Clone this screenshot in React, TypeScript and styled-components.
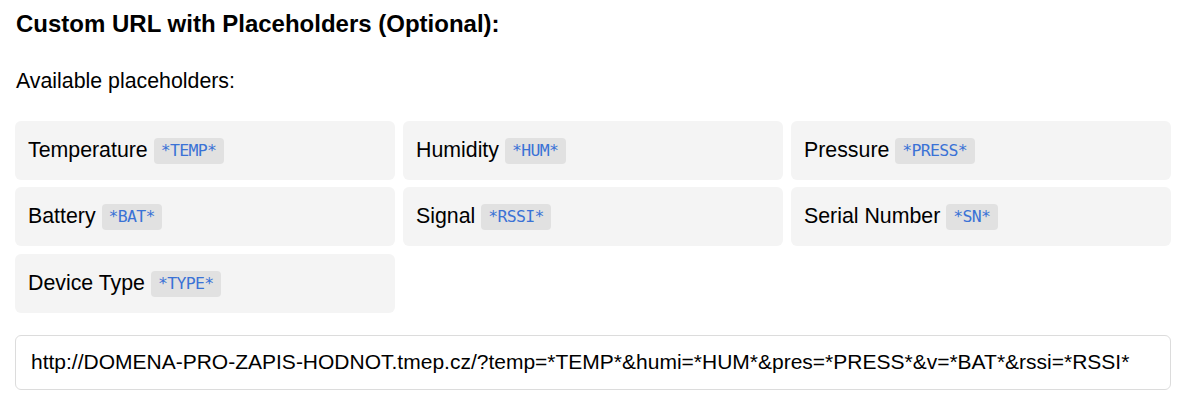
import * as React from "react"
import styled, { createGlobalStyle } from "styled-components"

const GlobalStyle = createGlobalStyle`
  html, body {
    margin: 0;
    padding: 0;
    background: #fff;
  }
  body {
    font-family: "Liberation Sans", Arial, sans-serif;
    color: #000;
  }
`

const Section = styled.div`
  width: 1156px;
  padding: 10px 0 0 15px;
  display: flex;
  flex-direction: column;
`

const Title = styled.h3`
  font-size: 24px;
  font-weight: bold;
  margin: 0 0 30px 1px;
  line-height: normal;
`

const Hint = styled.p`
  font-size: 21.33px;
  margin: 1px 0 26.5px 1px;
  line-height: normal;
`

const Grid = styled.div`
  display: grid;
  grid-template-columns: repeat(3, 1fr);
  gap: 7.5px 8px;
`

const Card = styled.div`
  height: 59px;
  box-sizing: border-box;
  padding: 0 13px;
  background: #f4f4f4;
  border-radius: 6px;
  display: flex;
  align-items: center;
  gap: 6px;
  font-size: 21.33px;
`

const Code = styled.code`
  font-family: "DejaVu Sans Mono", "Liberation Mono", monospace;
  font-size: 16.5px;
  letter-spacing: -0.7px;
  color: #3a72d6;
  background: #e1e1e1;
  border-radius: 4px;
  padding: 4px 7.5px 4px 7px;
  line-height: 18px;
  margin-top: 1px;
`

const UrlInput = styled.input`
  margin-top: 22px;
  height: 55px;
  box-sizing: border-box;
  width: 100%;
  padding: 0 15px;
  border: 1px solid #dcdcdc;
  border-radius: 6px;
  font-family: "Liberation Sans", Arial, sans-serif;
  font-size: 21px;
  color: #000;
  background: #fff;
  outline: none;
`

const placeholders = [
  { label: "Temperature", code: "*TEMP*" },
  { label: "Humidity", code: "*HUM*" },
  { label: "Pressure", code: "*PRESS*" },
  { label: "Battery", code: "*BAT*" },
  { label: "Signal", code: "*RSSI*" },
  { label: "Serial Number", code: "*SN*" },
  { label: "Device Type", code: "*TYPE*" }
]

export default function App() {
  const [url, setUrl] = React.useState(
    "http://DOMENA-PRO-ZAPIS-HODNOT.tmep.cz/?temp=*TEMP*&humi=*HUM*&pres=*PRESS*&v=*BAT*&rssi=*RSSI*"
  )
  return (
    <>
      <GlobalStyle />
      <Section>
        <Title>Custom URL with Placeholders (Optional):</Title>
        <Hint>Available placeholders:</Hint>
        <Grid>
          {placeholders.map(({ label, code }) => (
            <Card key={code}>
              <span>{label}</span>
              <Code>{code}</Code>
            </Card>
          ))}
        </Grid>
        <UrlInput value={url} onChange={e => setUrl(e.target.value)} />
      </Section>
    </>
  )
}
